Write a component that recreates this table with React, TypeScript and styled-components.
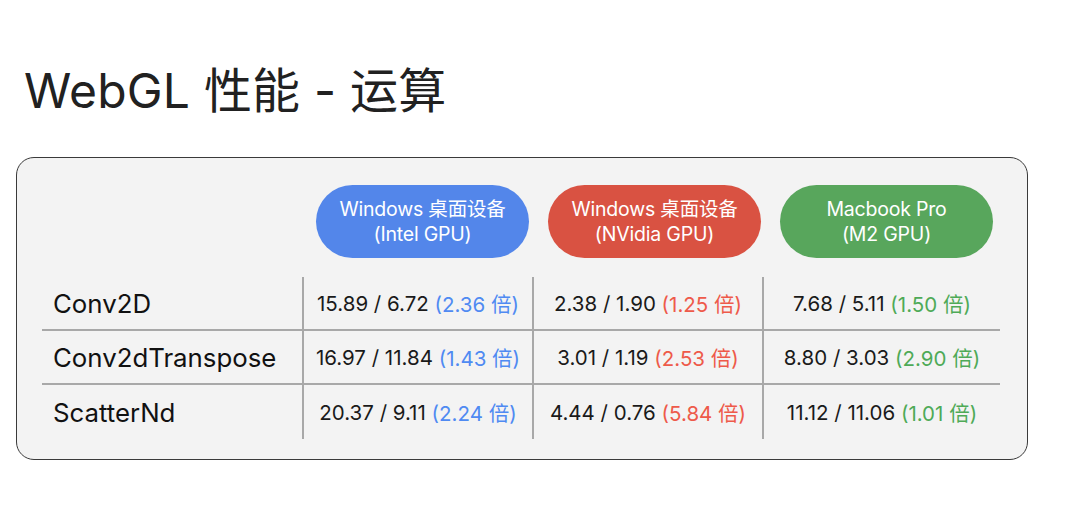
import styled, { createGlobalStyle } from "styled-components";

type Tone = "blue" | "red" | "green";

const TONES: Record<Tone, { pill: string; text: string }> = {
  blue: { pill: "#5386ea", text: "#4f8af2" },
  red: { pill: "#d95242", text: "#ee5a4a" },
  green: { pill: "#58a65c", text: "#4eaa57" },
};

const devices: { tone: Tone; name: string; gpu: string }[] = [
  { tone: "blue", name: "Windows 桌面设备", gpu: "(Intel GPU)" },
  { tone: "red", name: "Windows 桌面设备", gpu: "(NVidia GPU)" },
  { tone: "green", name: "Macbook Pro", gpu: "(M2 GPU)" },
];

// each cell: before / after (speedup)
const rows: { op: string; cells: [string, string][] }[] = [
  {
    op: "Conv2D",
    cells: [
      ["15.89 / 6.72", "2.36"],
      ["2.38 / 1.90", "1.25"],
      ["7.68 / 5.11", "1.50"],
    ],
  },
  {
    op: "Conv2dTranspose",
    cells: [
      ["16.97 / 11.84", "1.43"],
      ["3.01 / 1.19", "2.53"],
      ["8.80 / 3.03", "2.90"],
    ],
  },
  {
    op: "ScatterNd",
    cells: [
      ["20.37 / 9.11", "2.24"],
      ["4.44 / 0.76", "5.84"],
      ["11.12 / 11.06", "1.01"],
    ],
  },
];

const GlobalStyle = createGlobalStyle`
  body {
    margin: 0;
    background: #ffffff;
    font-family: Inter, "Noto Sans CJK SC", sans-serif;
    color: #1f1f1f;
  }
`;

export default function App() {
  return (
    <>
      <GlobalStyle />
      <Page>
        <Title>WebGL 性能 - 运算</Title>
        <Panel>
          <PillRow>
            {devices.map((d, i) => (
              <Pill key={i} $tone={d.tone}>
                <span>{d.name}</span>
                <span>{d.gpu}</span>
              </Pill>
            ))}
          </PillRow>
          <Table>
            {rows.map((row, r) => (
              <Row key={row.op} $last={r === rows.length - 1}>
                <OpCell>{row.op}</OpCell>
                {row.cells.map(([value, ratio], c) => (
                  <ValueCell key={c}>
                    {value}{" "}
                    <Ratio $tone={devices[c].tone}>({ratio} 倍)</Ratio>
                  </ValueCell>
                ))}
              </Row>
            ))}
          </Table>
        </Panel>
      </Page>
    </>
  );
}

const Page = styled.div`
  width: 1080px;
  height: 505px;
  padding: 58px 0 0 16px;
  box-sizing: border-box;
`;

const Title = styled.h1`
  margin: 0 0 33px 8px;
  font-size: 48px;
  font-weight: 400;
  line-height: 66px;
  color: #212121;
  letter-spacing: 0.2px;
`;

const Panel = styled.div`
  width: 1012px;
  height: 303px;
  box-sizing: border-box;
  border: 1.5px solid #3a3a3a;
  border-radius: 18px;
  background: #f3f3f3;
  padding: 27px 0 0 25px;
`;

const PillRow = styled.div`
  display: flex;
  gap: 19px;
  padding-left: 274px;
`;

const Pill = styled.div<{ $tone: Tone }>`
  width: 213px;
  height: 73px;
  border-radius: 37px;
  background: ${(p) => TONES[p.$tone].pill};
  color: #ffffff;
  display: flex;
  flex-direction: column;
  align-items: center;
  justify-content: center;
  font-size: 19.5px;
  line-height: 25px;
  letter-spacing: -0.2px;
`;

const Table = styled.div`
  margin-top: 19px;
  width: 958px;
`;

const Row = styled.div<{ $last: boolean }>`
  display: grid;
  grid-template-columns: 260px 230px 230px 238px;
  height: 54px;
  box-sizing: border-box;
  border-bottom: ${(p) => (p.$last ? "none" : "2px solid #a8a8a8")};
`;

const OpCell = styled.div`
  display: flex;
  align-items: center;
  padding-left: 11px;
  font-size: 25.8px;
  color: #111111;
`;

const ValueCell = styled.div`
  display: flex;
  align-items: center;
  justify-content: center;
  white-space: pre;
  font-size: 20.5px;
  color: #1a1a1a;
  border-left: 2px solid #a8a8a8;
`;

const Ratio = styled.span<{ $tone: Tone }>`
  color: ${(p) => TONES[p.$tone].text};
`;
